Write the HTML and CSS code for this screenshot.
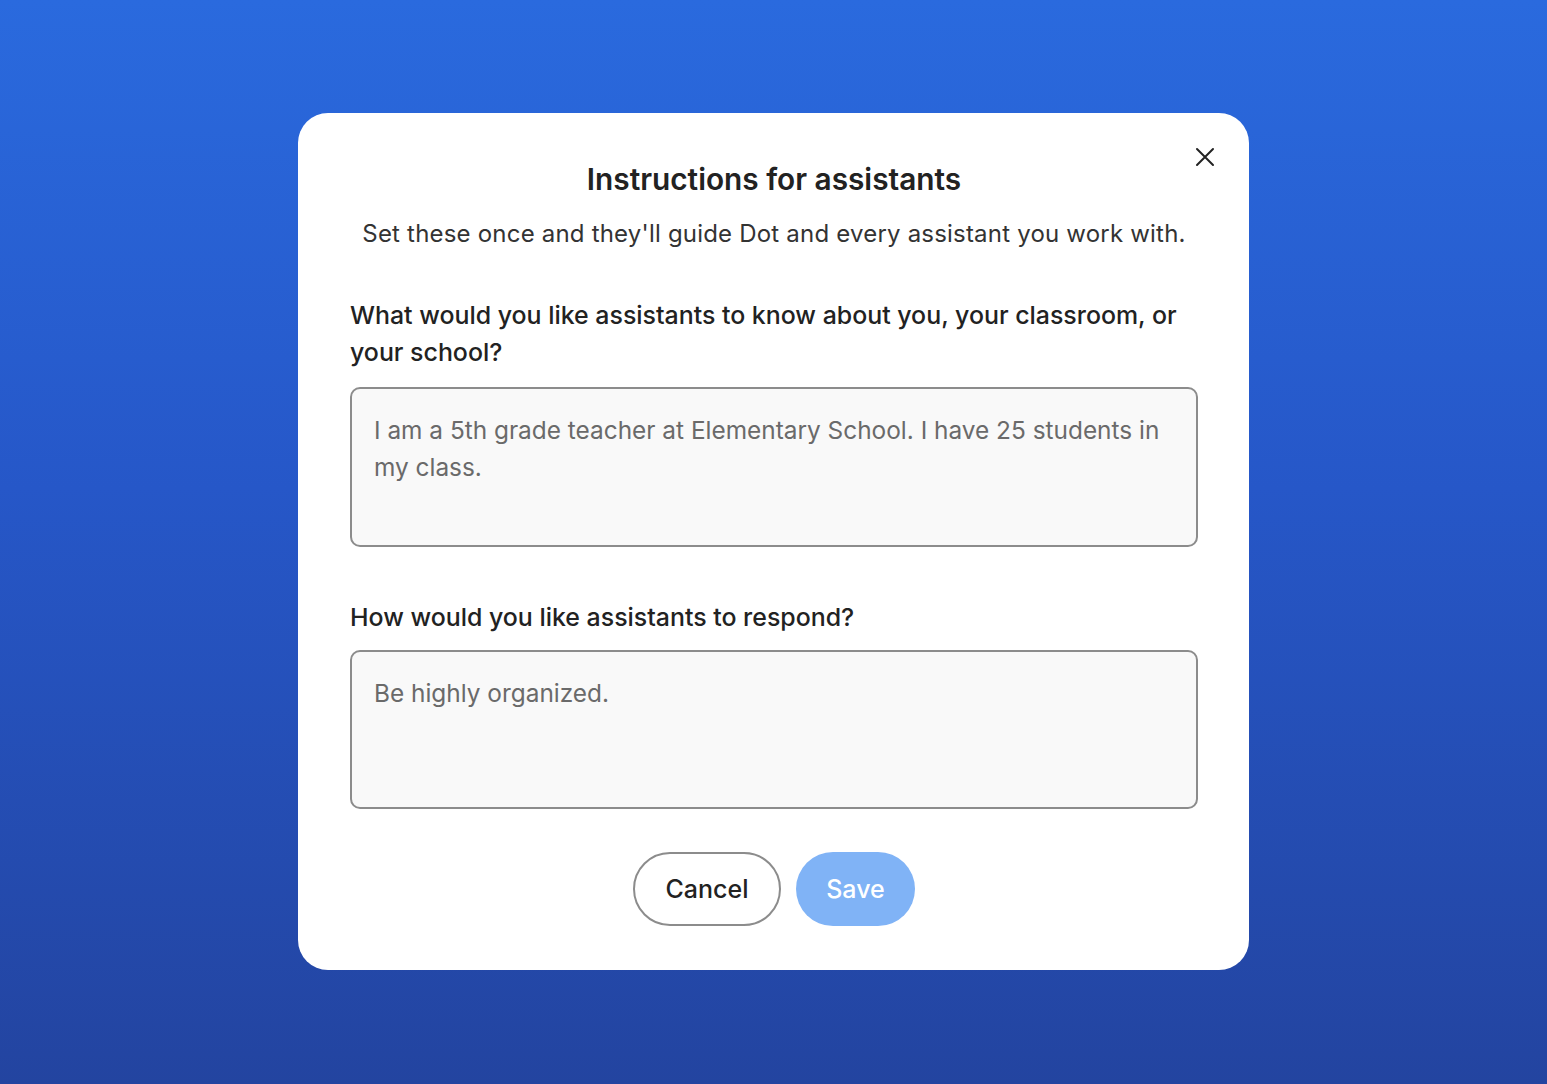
FILE: index.html
```html
<!DOCTYPE html>
<html lang="en">
<head>
<meta charset="utf-8">
<title>Instructions for assistants</title>
<link rel="stylesheet" href="styles.css">
</head>
<body>
<div class="stage">
  <div class="modal">
    <button class="close" aria-label="Close">
      <svg width="20" height="20" viewBox="0 0 20 20"><path d="M2 2 L18 18 M18 2 L2 18" stroke="#222" stroke-width="2" stroke-linecap="round"/></svg>
    </button>
    <h1 class="title">Instructions for assistants</h1>
    <p class="subtitle">Set these once and they'll guide Dot and every assistant you work with.</p>
    <label class="label first">What would you like assistants to know about you, your classroom, or your school?</label>
    <textarea class="field" placeholder="I am a 5th grade teacher at Elementary School. I have 25 students in my class."></textarea>
    <label class="label second">How would you like assistants to respond?</label>
    <textarea class="field field2" placeholder="Be highly organized."></textarea>
    <div class="actions">
      <button class="btn cancel">Cancel</button>
      <button class="btn save">Save</button>
    </div>
  </div>
</div>
</body>
</html>
```
FILE: styles.css
```css
* { box-sizing: border-box; }
html, body { margin: 0; padding: 0; }
body {
  font-family: Inter, "Noto Sans", sans-serif;
  width: 1547px;
  height: 1084px;
  overflow: hidden;
}
.stage {
  width: 1547px;
  height: 1084px;
  background: linear-gradient(180deg, #2a6ade 0%, #2657c8 45%, #2344a0 100%);
  padding-top: 113px;
  padding-left: 298px;
  display: flex;
}
.modal {
  position: relative;
  width: 951px;
  height: 857px;
  background: #fff;
  border-radius: 30px;
  padding: 46px 51px 44px 52px;
  display: flex;
  flex-direction: column;
}
.close {
  position: absolute;
  top: 34px;
  right: 34px;
  width: 20px;
  height: 20px;
  padding: 0;
  border: 0;
  background: none;
  display: flex;
}
.title {
  margin: 0;
  text-align: center;
  font-size: 29.8px;
  line-height: 40px;
  font-weight: 600;
  color: #222;
  letter-spacing: 0;
}
.subtitle {
  margin: 17px 0 0;
  text-align: center;
  font-size: 24px;
  line-height: 36px;
  font-weight: 400;
  color: #333;
  letter-spacing: 0.2px;
}
.label {
  display: block;
  font-size: 24.9px;
  line-height: 37px;
  font-weight: 500;
  color: #222;
}
.label.first { margin-top: 45px; }
.label.second { margin-top: 52px; }
.field {
  display: block;
  width: 100%;
  height: 160px;
  margin-top: 16px;
  border: 2px solid #8c8c8c;
  border-radius: 10px;
  background: #f9f9f9;
  padding: 23px 22px;
  font-family: Inter, "Noto Sans", sans-serif;
  font-size: 24.4px;
  line-height: 37px;
  color: #666;
  resize: none;
  outline: none;
}
.field::placeholder { color: #6a6a6a; opacity: 1; }
.field2 { margin-top: 14px; }
.actions {
  margin-top: 43px;
  display: flex;
  justify-content: center;
  gap: 15px;
}
.btn {
  height: 74px;
  border-radius: 37px;
  font-family: Inter, "Noto Sans", sans-serif;
  font-size: 25px;
  font-weight: 500;
  padding: 0;
}
.cancel {
  width: 148px;
  background: #fff;
  border: 2px solid #8c8c8c;
  color: #222;
}
.save {
  width: 119px;
  background: #80b3f6;
  border: 0;
  color: #fff;
}
```
